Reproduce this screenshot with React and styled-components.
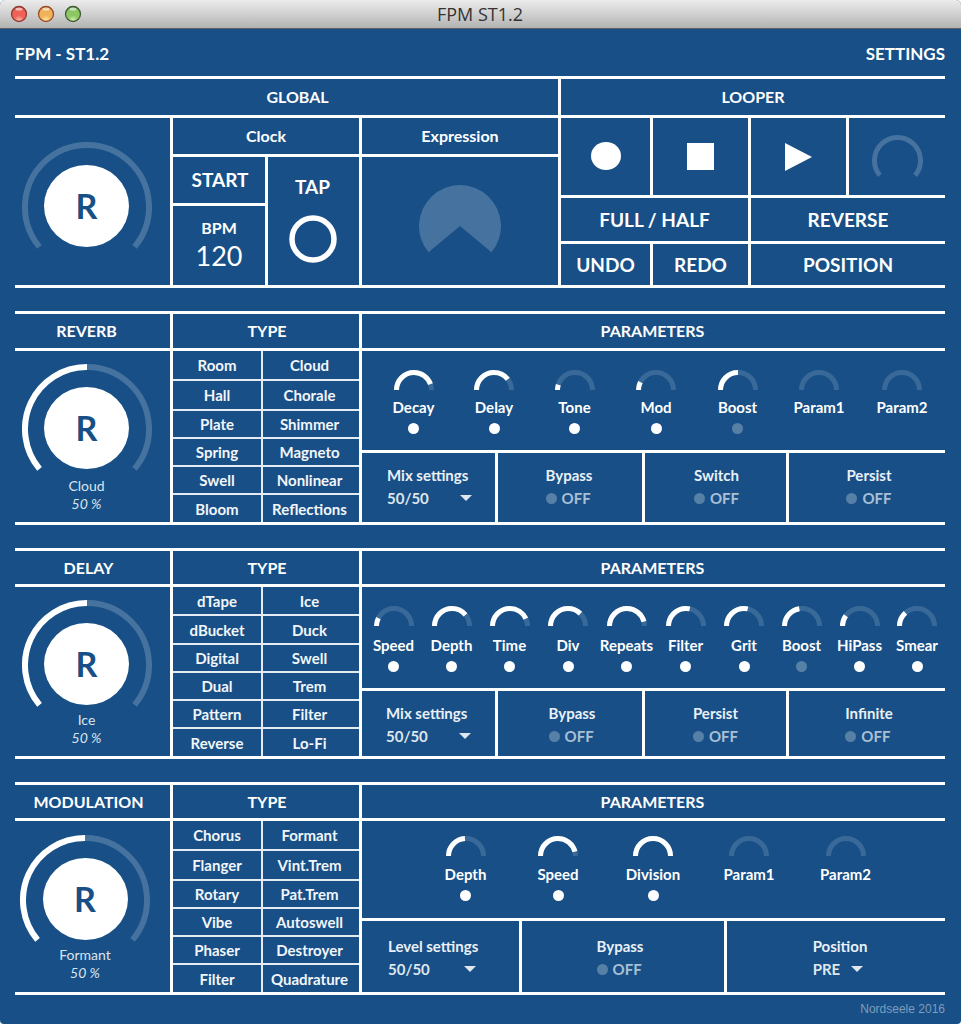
import React, { useState } from "react";
import styled, { createGlobalStyle, css } from "styled-components";

const BLUE = "#174f86";
const LINE = "3px solid #fff";
const THIN = "2px solid #e4ebf2";

const GlobalStyle = createGlobalStyle`
  *, *::before, *::after { box-sizing: border-box; }
  body {
    margin: 0;
    background: #fff;
    color: #fff;
    font-family: Lato, "Liberation Sans", sans-serif;
    font-weight: 700;
  }
  button, input, select {
    font: inherit;
    color: inherit;
    background: none;
    border: 0;
    border-radius: 0;
    margin: 0;
    padding: 0;
  }
  button, select { cursor: pointer; }
  svg { display: block; }
`;

const Window = styled.div`
  display: flex;
  flex-direction: column;
  min-height: 100vh;
  min-width: 880px;
  background: ${BLUE};
  border-radius: 5px 5px 4px 4px;
  overflow: hidden;
`;

const TitleBar = styled.div`
  display: grid;
  grid-template-columns: 1fr auto 1fr;
  align-items: center;
  height: 29px;
  padding: 0 11px 0 10px;
  background: linear-gradient(#ececec, #d6d6d6 40%, #b2b2b2);
  border-bottom: 1px solid #5c5f63;
  color: #333;
  font-family: "Open Sans", "Noto Sans", sans-serif;
  font-size: 18px;
  font-weight: 400;
  line-height: 24px;
`;

const Lights = styled.div`
  display: flex;
  gap: 9px;
`;

const AppHeader = styled.header`
  display: flex;
  justify-content: space-between;
  align-items: center;
  height: 47px;
  padding-top: 3px;
  font-size: 17px;
  line-height: 24px;
`;

const Title = styled.h1`
  margin: 0;
  font: inherit;
`;

const Content = styled.main`
  display: flex;
  flex-direction: column;
  gap: 23px;
  padding: 0 16px 0 15px;
`;

const Top = styled.div`
  display: grid;
  grid-template-columns: 543fr 387fr;
  border-top: ${LINE};
  border-bottom: ${LINE};
`;

const Pane = styled.section`
  display: flex;
  flex-direction: column;
  min-width: 0;
  ${(p) => p.$divided && css`border-left: ${LINE};`}
`;

const Heading = styled.h2`
  display: flex;
  align-items: center;
  justify-content: center;
  margin: 0;
  height: ${(p) => p.$height || 36}px;
  padding-left: ${(p) => p.$left || 0}px;
  padding-right: ${(p) => p.$right || 0}px;
  font-size: 16px;
  font-weight: 700;
  line-height: 24px;
`;

const GlobalGrid = styled.div`
  display: grid;
  grid-template-columns: 155px 189px 1fr;
  height: 170px;
  border-top: ${LINE};
`;

const Column = styled.div`
  display: flex;
  flex-direction: column;
  min-width: 0;
  border-left: ${LINE};
`;

const ClockGrid = styled.div`
  display: grid;
  grid-template-columns: 92fr 94fr;
  grid-template-rows: 49px 1fr;
  flex: 1;
  border-top: ${LINE};
`;

const PadButton = styled.button`
  display: flex;
  flex-direction: column;
  align-items: center;
  justify-content: center;
  min-width: 0;
  font-size: 19px;
  line-height: 24px;
`;

const StartButton = styled(PadButton)`
  padding-left: 2px;
  border-bottom: ${LINE};
`;

const TapButton = styled(PadButton)`
  grid-column: 2;
  grid-row: 1 / 3;
  gap: 16px;
  padding: 0 2px 4px 0;
  border-left: ${LINE};
`;

const Tempo = styled.label`
  display: flex;
  flex-direction: column;
  align-items: center;
  padding-top: 10px;
  font-size: 16px;
  line-height: 24px;
`;

const TempoInput = styled.input`
  width: 60px;
  height: 30px;
  font-size: 27px;
  font-weight: 400;
  text-align: center;
`;

const Pedal = styled.div`
  display: flex;
  flex: 1;
  justify-content: center;
  padding-top: 28px;
  border-top: ${LINE};
`;

const LooperGrid = styled.div`
  display: grid;
  grid-template-columns: 89fr 98fr 98fr 99fr;
  grid-template-rows: 77px 46px 44px;
  height: 170px;
  border-top: ${LINE};
`;

const LooperButton = styled(PadButton)`
  grid-column: span ${(p) => p.$span || 1};
  ${(p) => p.$divided && css`border-left: ${LINE};`}
  ${(p) => p.$ruled && css`border-top: ${LINE};`}
`;

const LooperMeter = styled.div`
  display: grid;
  place-items: center;
  border-left: ${LINE};
`;

const DialCell = styled.div`
  display: flex;
  flex-direction: column;
  align-items: center;
  padding-top: ${(p) => p.$top}px;
  padding-right: ${(p) => p.$right}px;
  color: #dbe4ed;
  font-size: 14px;
  font-weight: 400;
  line-height: 18px;
`;

const DialStack = styled.div`
  display: grid;
  justify-items: center;
  height: ${(p) => p.$height}px;
  > * { grid-area: 1 / 1; }
`;

const DialButton = styled.button`
  width: 85px;
  height: 82px;
  margin-top: 23px;
  border-radius: 50%;
  background: #fff;
  color: ${BLUE};
  font-size: 34px;
  font-weight: 700;
  line-height: 40px;
`;

const Percent = styled.em`
  font-style: italic;
`;

const Effect = styled.section`
  display: grid;
  grid-template-columns: 155px 189px 1fr;
  border-top: ${LINE};
  border-bottom: ${LINE};
`;

const EffectColumn = styled.div`
  display: flex;
  flex-direction: column;
  min-width: 0;
  ${(p) => p.$divided && css`border-left: ${LINE};`}
`;

const EffectBody = styled.div`
  display: flex;
  flex: 1;
  flex-direction: column;
  border-top: ${LINE};
`;

const TypeGrid = styled.div`
  display: grid;
  grid-template-columns: 88fr 98fr;
  grid-template-rows: ${(p) => p.$rows};
  grid-auto-flow: column;
`;

const TypeButton = styled.button`
  padding-right: ${(p) => (p.$second ? 3 : 0)}px;
  font-size: 15px;
  line-height: 20px;
  color: #f2f6fa;
  border-bottom: ${THIN};
  ${(p) => p.$second && css`border-left: ${THIN};`}
  ${(p) => p.$last && css`border-bottom: 0;`}
`;

const ParamRow = styled.div`
  display: grid;
  grid-template-columns: ${(p) => p.$columns};
  height: ${(p) => p.$height}px;
  padding: ${(p) => p.$padding};
`;

const Param = styled.div`
  display: flex;
  flex-direction: column;
  align-items: center;
`;

const ParamName = styled.label`
  margin-top: ${(p) => p.$gap}px;
  font-size: 15px;
  line-height: 20px;
`;

const Dot = styled.input`
  appearance: none;
  width: 11px;
  height: 11px;
  border-radius: 50%;
  background: rgba(255, 255, 255, 0.28);
  &:checked { background: #fff; }
`;

const ParamDot = styled(Dot)`
  margin-top: 6px;
`;

const OptionRow = styled.div`
  display: grid;
  grid-template-columns: ${(p) => p.$columns};
  flex: 1;
  border-top: ${LINE};
`;

const Option = styled.div`
  display: flex;
  justify-content: ${(p) => (p.$start ? "flex-start" : "center")};
  padding-top: ${(p) => p.$top}px;
  padding-left: ${(p) => p.$left || 0}px;
  padding-right: ${(p) => p.$right || 0}px;
  ${(p) => p.$divided && css`border-left: ${LINE};`}
`;

const Field = styled.div`
  display: flex;
  flex-direction: column;
  align-items: flex-start;
  gap: 3px;
  color: #eaf0f6;
  font-size: 15px;
  line-height: 20px;
`;

const Toggle = styled.label`
  display: flex;
  align-items: center;
  gap: 5px;
  color: #a9bfd5;
`;

const Picker = styled.div`
  display: grid;
  align-items: center;
  justify-items: end;
  width: ${(p) => p.$width}px;
  color: #dfe6ed;
  > * { grid-area: 1 / 1; }
  > svg { pointer-events: none; }
`;

const Select = styled.select`
  appearance: none;
  width: 100%;
  height: 20px;
`;

const Credit = styled.footer`
  padding: 6px 16px 7px;
  color: #7f9dbd;
  font-family: "Liberation Sans", Arial, sans-serif;
  font-size: 12px;
  font-weight: 400;
  line-height: 16px;
  text-align: right;
`;

function polar(cx, cy, r, deg) {
  const a = (deg * Math.PI) / 180;
  return `${(cx + r * Math.cos(a)).toFixed(2)} ${(cy + r * Math.sin(a)).toFixed(2)}`;
}

/* Open ring that runs clockwise from the lower left to the lower right. */
function Ring({ size, stroke, value = 0 }) {
  const c = size / 2;
  const r = c - stroke / 2;
  const arc = (from, to) =>
    `M${polar(c, c, r, from)} A${r} ${r} 0 ${to - from > 180 ? 1 : 0} 1 ${polar(c, c, r, to)}`;
  const height = Math.ceil(c + c * 0.68);
  return (
    <svg width={size} height={height} viewBox={`0 0 ${size} ${height}`} fill="none" strokeWidth={stroke} aria-hidden="true">
      <path d={arc(140, 400)} stroke="#fff" strokeOpacity="0.2" />
      {value > 0 && <path d={arc(140, 140 + 260 * value)} stroke="#fff" />}
    </svg>
  );
}

function Gauge({ value }) {
  const d = "M2.5 20 A17.5 17.5 0 0 1 37.5 20";
  return (
    <svg width="40" height="20" viewBox="0 0 40 20" fill="none" stroke="#fff" strokeWidth="5" aria-hidden="true">
      <path d={d} strokeOpacity="0.15" />
      {value > 0 && <path d={d} pathLength="100" strokeDasharray={`${value} 200`} />}
    </svg>
  );
}

function Caret() {
  return (
    <svg width="12" height="6" viewBox="0 0 12 6" aria-hidden="true">
      <path d="M0 0H12L6 6Z" fill="currentColor" />
    </svg>
  );
}

function Light({ id, edge, dark, fill, glow }) {
  return (
    <svg width="18" height="18" viewBox="0 0 18 18" aria-hidden="true">
      <defs>
        <radialGradient id={id} cx="0.5" cy="0.95" r="0.9">
          <stop offset="0" stopColor={glow} />
          <stop offset="0.4" stopColor={fill} />
          <stop offset="0.8" stopColor={fill} />
          <stop offset="1" stopColor={dark} />
        </radialGradient>
      </defs>
      <circle cx="9" cy="9.5" r="8" fill="#fff" opacity="0.4" />
      <circle cx="9" cy="9" r="7.5" fill={`url(#${id})`} stroke={edge} strokeWidth="1.3" />
      <ellipse cx="9" cy="4" rx="3.6" ry="1.6" fill="#fff" opacity="0.6" />
    </svg>
  );
}

function Dial({ label, value, type, top, right, height = 113 }) {
  return (
    <DialCell $top={top} $right={right}>
      <DialStack $height={height}>
        <Ring size={130} stroke={6} value={value} />
        <DialButton aria-label={label}>R</DialButton>
      </DialStack>
      {type && <span>{type}</span>}
      {type && <Percent>{Math.round(value * 100)} %</Percent>}
    </DialCell>
  );
}

function OptionCell({ id, option, first, top, left }) {
  const { name, kind, choices, width } = option;
  return (
    <Option $start={first} $divided={!first} $top={top} $left={first ? left : option.left} $right={option.right}>
      <Field>
        <label htmlFor={id}>{name}</label>
        {kind === "select" ? (
          <Picker $width={width}>
            <Select id={id} defaultValue={choices[0]}>
              {choices.map((c) => (
                <option key={c}>{c}</option>
              ))}
            </Select>
            <Caret />
          </Picker>
        ) : (
          <Toggle>
            <Dot type="checkbox" id={id} />
            OFF
          </Toggle>
        )}
      </Field>
    </Option>
  );
}

const effects = [
  {
    name: "REVERB",
    current: "Cloud",
    heading: 34,
    dial: { top: 13, right: 12, height: 113 },
    rows: "30px 30px 28px 28px 28px 27px",
    types: ["Room", "Hall", "Plate", "Spring", "Swell", "Bloom", "Cloud", "Chorale", "Shimmer", "Magneto", "Nonlinear", "Reflections"],
    columns: "81fr 80fr 81fr 82fr 81fr 82fr 84fr",
    padding: "19px 1px 0 11px",
    height: 99,
    gap: 7,
    params: [
      ["Decay", 89, true],
      ["Delay", 79, true],
      ["Tone", 10, true],
      ["Mod", 15, true],
      ["Boost", 50, false],
      ["Param1", 0],
      ["Param2", 0],
    ],
    optionColumns: "133fr 147fr 144fr 159fr",
    optionTop: 12,
    optionLeft: 25,
    options: [
      { name: "Mix settings", kind: "select", choices: ["50/50"], width: 85 },
      { name: "Bypass", right: 2 },
      { name: "Switch", left: 2 },
      { name: "Persist", left: 4 },
    ],
  },
  {
    name: "DELAY",
    current: "Ice",
    heading: 33,
    dial: { top: 13, right: 12, height: 111 },
    rows: "29px 29px 28px 28px 28px 27px",
    types: ["dTape", "dBucket", "Digital", "Dual", "Pattern", "Reverse", "Ice", "Duck", "Swell", "Trem", "Filter", "Lo-Fi"],
    columns: "59fr 57fr 59fr 58fr 59fr 59fr 58fr 57fr 59fr 56fr",
    padding: "19px 0 0 2px",
    height: 101,
    gap: 9,
    params: [
      ["Speed", 15, true],
      ["Depth", 78, true],
      ["Time", 86, true],
      ["Div", 75, true],
      ["Repeats", 92, true],
      ["Filter", 57, true],
      ["Grit", 57, true],
      ["Boost", 45, false],
      ["HiPass", 20, true],
      ["Smear", 27, true],
    ],
    optionColumns: "133fr 147fr 144fr 159fr",
    optionTop: 12,
    optionLeft: 24,
    options: [
      { name: "Mix settings", kind: "select", choices: ["50/50"], width: 85 },
      { name: "Bypass", left: 4 },
      { name: "Persist" },
      { name: "Infinite", left: 4 },
    ],
  },
  {
    name: "MODULATION",
    current: "Formant",
    heading: 33,
    dial: { top: 14, right: 15, height: 111 },
    rows: "30px 30px 28px 28px 28px 27px",
    types: ["Chorus", "Flanger", "Rotary", "Vibe", "Phaser", "Filter", "Formant", "Vint.Trem", "Pat.Trem", "Autoswell", "Destroyer", "Quadrature"],
    columns: "95fr 90fr 100fr 92fr 101fr",
    padding: "15px 49px 0 56px",
    height: 97,
    gap: 8,
    params: [
      ["Depth", 48, true],
      ["Speed", 92, true],
      ["Division", 100, true],
      ["Param1", 0],
      ["Param2", 0],
    ],
    optionColumns: "157fr 205fr 221fr",
    optionTop: 15,
    optionLeft: 26,
    options: [
      { name: "Level settings", kind: "select", choices: ["50/50"], width: 88 },
      { name: "Bypass", right: 6 },
      { name: "Position", kind: "select", choices: ["PRE", "POST"], width: 50, left: 8 },
    ],
  },
];

function EffectPanel({ effect }) {
  const slug = effect.name.toLowerCase();
  const half = effect.types.length / 2;
  return (
    <Effect>
      <EffectColumn>
        <Heading $height={effect.heading} $right={effect.name === "REVERB" ? 12 : 8}>{effect.name}</Heading>
        <EffectBody>
          <Dial label={`${effect.name} reset`} value={0.5} type={effect.current} {...effect.dial} />
        </EffectBody>
      </EffectColumn>
      <EffectColumn $divided>
        <Heading $height={effect.heading} $left={2}>TYPE</Heading>
        <EffectBody>
          <TypeGrid $rows={effect.rows}>
            {effect.types.map((t, i) => (
              <TypeButton key={t} $second={i >= half} $last={i % half === half - 1}>
                {t}
              </TypeButton>
            ))}
          </TypeGrid>
        </EffectBody>
      </EffectColumn>
      <EffectColumn $divided>
        <Heading $height={effect.heading} $right={2}>PARAMETERS</Heading>
        <EffectBody>
          <ParamRow $columns={effect.columns} $padding={effect.padding} $height={effect.height}>
            {effect.params.map(([name, value, on]) => {
              const id = `${slug}-${name}`;
              return (
                <Param key={name}>
                  <Gauge value={value} />
                  <ParamName $gap={effect.gap} as={on === undefined ? "span" : "label"} htmlFor={on === undefined ? undefined : id}>
                    {name}
                  </ParamName>
                  {on !== undefined && <ParamDot type="checkbox" id={id} defaultChecked={on} />}
                </Param>
              );
            })}
          </ParamRow>
          <OptionRow $columns={effect.optionColumns}>
            {effect.options.map((o, i) => (
              <OptionCell
                key={o.name}
                id={`${slug}-option-${i}`}
                option={o}
                first={i === 0}
                top={effect.optionTop}
                left={effect.optionLeft}
              />
            ))}
          </OptionRow>
        </EffectBody>
      </EffectColumn>
    </Effect>
  );
}

export default function App() {
  const [bpm, setBpm] = useState("120");
  return (
    <>
      <GlobalStyle />
      <Window>
        <TitleBar>
          <Lights>
            <Light id="close" edge="#8f3a33" dark="#c9382f" fill="#ee6358" glow="#ffc0b4" />
            <Light id="minimise" edge="#9a4a2a" dark="#d98a2e" fill="#f0b35a" glow="#fff0a8" />
            <Light id="zoom" edge="#3f5a35" dark="#5f9a3c" fill="#8bc763" glow="#dcf7b4" />
          </Lights>
          <span>FPM ST1.2</span>
        </TitleBar>
        <Content>
          <div>
            <AppHeader>
              <Title>FPM - ST1.2</Title>
              <button>SETTINGS</button>
            </AppHeader>
            <Top>
              <Pane>
                <Heading $left={22}>GLOBAL</Heading>
                <GlobalGrid>
                  <Dial label="Global reset" value={0} top={24} right={12} />
                  <Column>
                    <Heading>Clock</Heading>
                    <ClockGrid>
                      <StartButton>START</StartButton>
                      <TapButton>
                        TAP
                        <svg width="48" height="48" viewBox="0 0 48 48" aria-hidden="true">
                          <circle cx="24" cy="24" r="21" fill="none" stroke="#fff" strokeWidth="5.5" />
                        </svg>
                      </TapButton>
                      <Tempo>
                        BPM
                        <TempoInput value={bpm} onChange={(e) => setBpm(e.target.value)} />
                      </Tempo>
                    </ClockGrid>
                  </Column>
                  <Column>
                    <Heading>Expression</Heading>
                    <Pedal>
                      <svg width="82" height="70" viewBox="0 0 82 70" aria-hidden="true">
                        <path
                          d={`M41 41 L${polar(41, 41, 41, 140)} A41 41 0 1 1 ${polar(41, 41, 41, 400)} Z`}
                          fill="#fff"
                          fillOpacity="0.2"
                        />
                      </svg>
                    </Pedal>
                  </Column>
                </GlobalGrid>
              </Pane>
              <Pane $divided>
                <Heading>LOOPER</Heading>
                <LooperGrid>
                  <LooperButton aria-label="Record">
                    <svg width="30" height="30" viewBox="0 0 30 30" aria-hidden="true">
                      <ellipse cx="15" cy="14" rx="15" ry="14" fill="#fff" />
                    </svg>
                  </LooperButton>
                  <LooperButton $divided aria-label="Stop">
                    <svg width="27" height="27" viewBox="0 0 27 27" aria-hidden="true">
                      <rect width="27" height="27" fill="#fff" />
                    </svg>
                  </LooperButton>
                  <LooperButton $divided aria-label="Play">
                    <svg width="27" height="28" viewBox="0 0 27 28" aria-hidden="true">
                      <path d="M0 0L27 14L0 28Z" fill="#fff" />
                    </svg>
                  </LooperButton>
                  <LooperMeter>
                    <Ring size={51} stroke={5} />
                  </LooperMeter>
                  <LooperButton $span={2} $ruled>FULL / HALF</LooperButton>
                  <LooperButton $span={2} $ruled $divided>REVERSE</LooperButton>
                  <LooperButton $ruled>UNDO</LooperButton>
                  <LooperButton $ruled $divided>REDO</LooperButton>
                  <LooperButton $span={2} $ruled $divided>POSITION</LooperButton>
                </LooperGrid>
              </Pane>
            </Top>
          </div>
          {effects.map((e) => (
            <EffectPanel key={e.name} effect={e} />
          ))}
        </Content>
        <Credit>Nordseele 2016</Credit>
      </Window>
    </>
  );
}
